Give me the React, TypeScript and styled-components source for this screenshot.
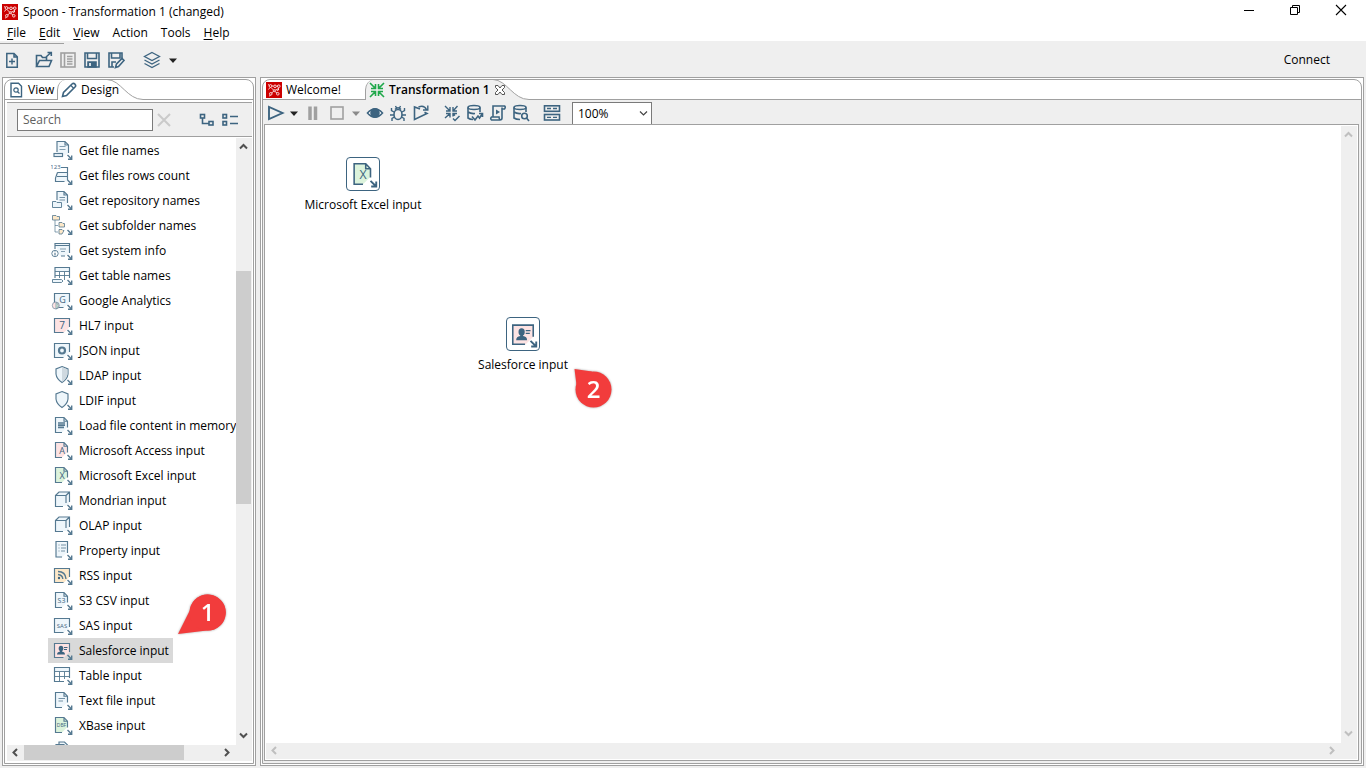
import React from "react";
import styled, { createGlobalStyle, css } from "styled-components";

const INK = "#3d6480";
const SOFT_INK = "#557991";
const LINE = "#a0a0a0";
const CHROME = "#efefef";

const GlobalStyle = createGlobalStyle`
  * { box-sizing: border-box; }
  html, body { margin: 0; padding: 0; }
  body, button, input, select {
    font-family: "Open Sans", "Noto Sans", sans-serif;
    font-size: 12px;
    line-height: 16px;
    color: #000;
  }
  button { background: none; border: 0; padding: 0; margin: 0; }
  svg { display: block; flex: none; }
`;

/* ---------- window chrome ---------- */

const Window = styled.div`
  display: flex;
  flex-direction: column;
  height: 100vh;
  min-height: 480px;
  background: ${CHROME};
  overflow: hidden;
`;

const TitleBar = styled.header`
  display: flex;
  align-items: center;
  gap: 5px;
  height: 23px;
  padding: 0 17px 0 2px;
  background: #fff;
`;

const Title = styled.h1`
  flex: 1;
  margin: 0;
  font-size: 12px;
  font-weight: 400;
  line-height: 16px;
`;

const WindowButtons = styled.div`
  display: flex;
  align-self: flex-start;
  gap: 30px;
  padding-top: 2px;
`;

const MenuBar = styled.nav`
  display: flex;
  align-items: center;
  gap: 13px;
  height: 18px;
  padding: 2px 7px 0;
  background: #fff;
`;

const Mnemonic = styled.span`
  text-decoration: underline;
  text-underline-offset: 2px;
`;

const MainToolbar = styled.div`
  display: flex;
  align-items: center;
  height: 36px;
  padding: 2px 36px 0 3px;
`;

const MenuRule = styled.hr`
  width: 64px;
  height: 1px;
  margin: 2px 0 -3px;
  border: 0;
  background: ${LINE};
`;

const ToolGroup = styled.div<{ $gap: number; $after: number }>`
  display: flex;
  align-items: center;
  gap: ${(p) => p.$gap}px;
  margin-right: ${(p) => p.$after}px;
`;

const Spacer = styled.div`
  flex: 1;
`;

const Main = styled.main`
  display: flex;
  flex: 1;
  gap: 4px;
  min-height: 0;
  padding: 0 2px 2px;
`;

/* ---------- panels ---------- */

const Panel = styled.section<{ $side?: boolean }>`
  position: relative;
  display: flex;
  min-width: 0;
  padding: 1px;
  border: 1px solid ${LINE};
  background: #fff;
  ${(p) => (p.$side ? css`flex: 0 0 254px;` : css`flex: 1;`)}
`;

const PanelInner = styled.div`
  display: flex;
  flex: 1;
  flex-direction: column;
  min-width: 0;
  border: 1px solid ${LINE};
  border-radius: 8px 8px 0 0;
  overflow: hidden;
`;

const TabStrip = styled.div`
  display: flex;
  flex: none;
  height: 20px;
`;

const Tab = styled.button<{ $width: number }>`
  display: flex;
  align-items: center;
  gap: 4px;
  width: ${(p) => p.$width}px;
  padding-left: 3px;
  border-bottom: 1px solid ${LINE};
  white-space: nowrap;
`;

const ActiveTab = styled.button<{ $width: number; $fill: string; $bold?: boolean }>`
  position: relative;
  z-index: 1;
  display: flex;
  align-items: center;
  gap: 4px;
  width: ${(p) => p.$width}px;
  padding-left: 3px;
  border-left: 1px solid ${LINE};
  border-top-left-radius: 8px 10px;
  background: ${(p) => p.$fill};
  font-weight: ${(p) => (p.$bold ? 600 : 400)};
  white-space: nowrap;
`;

const StripRest = styled.div`
  flex: 1;
  border-bottom: 1px solid ${LINE};
`;

const SideBody = styled.div`
  display: flex;
  flex: 1;
  flex-direction: column;
  min-height: 0;
  padding: 2px 1px 2px 2px;
`;

const SearchRow = styled.div`
  display: flex;
  flex: none;
  align-items: center;
  height: 35px;
  margin-bottom: 1px;
  padding: 0 13px 0 10px;
  border-top: 1px solid ${LINE};
  border-bottom: 1px solid ${LINE};
  background: ${CHROME};
`;

const SearchInput = styled.input`
  width: 136px;
  height: 22px;
  margin-right: 4px;
  padding: 0 5px;
  border: 1px solid #7a7a7a;
  border-radius: 0;
  background: #fff;
  outline: 0;
  &::placeholder { color: #606060; opacity: 1; }
`;

const ScrollArea = styled.div`
  display: grid;
  flex: 1;
  grid-template-columns: minmax(0, 1fr) 16px;
  grid-template-rows: minmax(0, 1fr) 16px;
  min-height: 0;
`;

const Corner = styled.div`
  background: ${CHROME};
`;

const Tree = styled.ul`
  margin: 0;
  padding: 0 0 0 41px;
  list-style: none;
  overflow: hidden;
`;

const TreeRow = styled.button<{ $selected?: boolean }>`
  display: flex;
  align-items: center;
  gap: 6px;
  height: 25px;
  padding: 0 4px 0 3px;
  background: ${(p) => (p.$selected ? "#d9d9d9" : "transparent")};
  white-space: nowrap;
  svg { margin-bottom: 1px; }
`;

const Bar = styled.div<{ $vertical?: boolean }>`
  display: flex;
  flex-direction: ${(p) => (p.$vertical ? "column" : "row")};
  padding: 0 1px 1px 0;
  background: ${CHROME};
`;

const BarButton = styled.button`
  display: flex;
  flex: 0 0 17px;
  align-items: center;
  justify-content: center;
`;

const Portion = styled.div<{ $grow: number; $thumb?: boolean }>`
  flex: ${(p) => p.$grow} 1 0;
  background: ${(p) => (p.$thumb ? "#cdcdcd" : "transparent")};
`;

/* ---------- editor ---------- */

const EditorBody = styled.div`
  display: flex;
  flex: 1;
  flex-direction: column;
  min-height: 0;
  padding: 0 2px 2px 1px;
  background: ${CHROME};
`;

const EditorToolbar = styled.div`
  display: flex;
  flex: none;
  align-items: center;
  height: 24px;
  padding: 2px 0 0 3px;
`;

const ZoomBox = styled.div`
  position: relative;
  width: 80px;
  height: 22px;
  svg {
    position: absolute;
    top: 7px;
    right: 4px;
    pointer-events: none;
  }
`;

const ZoomSelect = styled.select`
  width: 100%;
  height: 100%;
  padding: 0 5px;
  appearance: none;
  border: 1px solid #7a7a7a;
  border-bottom: 0;
  border-radius: 0;
  background: #fff;
`;

const CanvasFrame = styled.div`
  display: flex;
  flex: 1;
  min-height: 0;
  padding: 1px;
  border: 1px solid ${LINE};
  background: #fff;
`;

const Canvas = styled.div`
  position: relative;
  overflow: hidden;
`;

const StepNode = styled.figure<{ $x: number; $y: number }>`
  position: absolute;
  top: ${(p) => p.$y}px;
  left: ${(p) => p.$x}px;
  display: flex;
  flex-direction: column;
  align-items: center;
  gap: 6px;
  width: 140px;
  margin: 0;
`;

const StepTile = styled.div`
  display: flex;
  align-items: center;
  justify-content: center;
  width: 34px;
  height: 34px;
  border: 1px solid ${INK};
  border-radius: 4px;
`;

const Callout = styled.svg<{ $x: number; $y: number }>`
  position: absolute;
  top: ${(p) => p.$y}px;
  left: ${(p) => p.$x}px;
  filter: drop-shadow(0 0 1px rgba(0, 0, 0, 0.35));
  font-family: "Open Sans", sans-serif;
  font-size: 24px;
  font-weight: 600;
`;

/* ---------- icons ---------- */

type DrawingProps = { children: React.ReactNode; size?: number; width?: number; stroke?: string };

const Drawing = ({ children, size = 18, width, stroke = INK }: DrawingProps) => (
  <svg
    width={width ?? size}
    height={size}
    viewBox={`0 0 ${width ?? size} ${size}`}
    fill="none"
    stroke={stroke}
    strokeWidth="1.6"
    aria-hidden="true"
  >
    {children}
  </svg>
);

const Logo = () => (
  <svg width="16" height="16" viewBox="0 0 16 16" fill="none" stroke="#fff" strokeWidth="0.8" aria-hidden="true">
    <rect width="16" height="16" fill="#cc0000" stroke="none" />
    <path d="M5 5.500L7.500 8M10.500 7L9 8.500M7.500 9.500L5.500 11M9 9.500L11 11M6 4H7.500M10.500 4.200L12 4M4.500 13.500L3 14M12.500 6V8" />
    <circle cx="4.500" cy="4" r="1.400" />
    <circle cx="9" cy="4.300" r="1.300" />
    <circle cx="12.800" cy="4.200" r="1.300" />
    <circle cx="4.800" cy="11.800" r="1.300" />
    <circle cx="11.800" cy="11.800" r="1.300" />
    <circle cx="8.300" cy="8.700" r="1" />
    <circle cx="11.500" cy="7.800" r="0.800" />
    <path d="M2 2.500L3.300 3.200M2.500 7.500L4 5.500" />
  </svg>
);

const Caret = ({ color = "#222" }: { color?: string }) => (
  <svg width="8" height="5" viewBox="0 0 8 5" aria-hidden="true">
    <path d="M0 0.500H8L4 5Z" fill={color} />
  </svg>
);

const chevrons = {
  up: "M1 6.500L4.500 3L8 6.500",
  down: "M1 2.500L4.500 6L8 2.500",
  left: "M6 1L2.500 4.500L6 8",
  right: "M3 1L6.500 4.500L3 8",
};

const Chevron = ({ dir, color, weight = 2 }: { dir: keyof typeof chevrons; color: string; weight?: number }) => (
  <svg width="9" height="9" viewBox="0 0 9 9" fill="none" stroke={color} strokeWidth={weight} aria-hidden="true">
    <path d={chevrons[dir]} />
  </svg>
);

const icons = {
  create: (
    <Drawing>
      <path d="M3.800 2.500H11L14.300 5.800V16.200H3.800ZM11 2.500V6H14.500" strokeWidth="1.500" />
      <path d="M9 7.500V13.500M6 10.500H12" strokeWidth="1.400" />
    </Drawing>
  ),
  open: (
    <Drawing>
      <path d="M1.500 15.500V4.500H6L7.500 6.500H11.500V9M1.500 15.500L4.500 9.500H16.500L14 15.500Z" />
      <path d="M11 6L16 1.500M12.500 1.500H16.300V5" />
    </Drawing>
  ),
  explore: (
    <Drawing stroke="#a0a0a0">
      <rect x="2" y="2" width="14" height="14" />
      <path d="M5.500 2V16M8 5.500H13.500M8 8H13.500M8 10.500H13.500M8 13H13.500" />
    </Drawing>
  ),
  save: (
    <Drawing>
      <path d="M2 2H16V16H2Z" />
      <path d="M4.500 2V7.500H13.500V2" />
      <path d="M5 11H13V16H5Z" fill={INK} />
      <path d="M7 12V15" stroke="#fff" />
    </Drawing>
  ),
  saveAs: (
    <Drawing>
      <path d="M7 16H2V2H15V7" />
      <path d="M4.500 2V7H13V2M5 16V11H9" />
      <path d="M8.500 16.500L9.500 13L15 7.500L17 9.500L11.500 15.500Z" fill={CHROME} />
    </Drawing>
  ),
  layers: (
    <Drawing>
      <path d="M9 1.500L16.500 5.500L9 9.500L1.500 5.500Z" strokeWidth="1.300" />
      <path d="M1.500 9L9 13L16.500 9M1.500 12.500L9 16.500L16.500 12.500" strokeWidth="1.300" />
    </Drawing>
  ),
  view: (
    <Drawing size={16}>
      <path d="M3 1.200H10.500L13.500 4.200V14.800H3Z" strokeWidth="1.400" />
      <circle cx="8" cy="8" r="2.200" strokeWidth="1.200" />
      <path d="M9.500 9.700L11.500 11.500" strokeWidth="1.200" />
    </Drawing>
  ),
  pencil: (
    <Drawing size={16}>
      <path d="M1.500 14.500L2.500 10.500L11 2Q12.500 0.800 14 2.200Q15.300 3.700 14 5L5.500 13.500Z" />
      <path d="M10 3.500L12.800 6.500" strokeWidth="1.200" />
    </Drawing>
  ),
  clear: (
    <Drawing size={14} stroke="#cacaca">
      <path d="M1 1L13 13M13 1L1 13" strokeWidth="2" />
    </Drawing>
  ),
  expand: (
    <Drawing size={14} width={16}>
      <rect x="1.500" y="1.500" width="4" height="3.500" />
      <rect x="10" y="8.500" width="4" height="3.500" />
      <path d="M3.500 5V10.500H10" />
    </Drawing>
  ),
  collapse: (
    <Drawing size={14} width={18}>
      <rect x="2" y="1.500" width="3.500" height="3.500" />
      <rect x="2" y="8.500" width="3.500" height="3.500" />
      <path d="M9 3.500H17M9 10.500H17" />
    </Drawing>
  ),
  play: (
    <Drawing>
      <path d="M2 3V15L15.500 9Z" strokeWidth="1.900" />
    </Drawing>
  ),
  pause: (
    <Drawing stroke="#a0a0a0">
      <path d="M6 2.500V16M11.500 2.500V16" strokeWidth="3.500" />
    </Drawing>
  ),
  stop: (
    <Drawing stroke="#a0a0a0">
      <rect x="3" y="3" width="12" height="12" />
    </Drawing>
  ),
  eye: (
    <Drawing>
      <path d="M1.500 9Q9 0.500 16.500 9Q9 17.500 1.500 9Z" fill="#fff" />
      <circle cx="9" cy="9" r="4" fill={INK} />
    </Drawing>
  ),
  bug: (
    <Drawing>
      <ellipse cx="9" cy="10.500" rx="4" ry="5" />
      <path d="M6 5.500Q9 2 12 5.500M6.500 2L7.500 4M11.500 2L10.500 4M5 8L2.500 6.500V4M13 8L15.500 6.500V4M5 11H1M13 11H17M5.500 13L3 14.500V17M12.500 13L15 14.500V17" strokeWidth="1.400" />
    </Drawing>
  ),
  replay: (
    <Drawing>
      <path d="M8 5L2.500 3V15.500L15 9.500L12.500 8.200" />
      <path d="M6.500 3Q12 0.500 14.500 5.500M15.800 1.500V6H11" strokeWidth="1.400" />
    </Drawing>
  ),
  verify: (
    <Drawing>
      <path d="M2 2L6.500 6.500M7 3V7H3M14.500 2L10.500 6.500M10 3V7H14M2 14L6.500 10M7 13.500V9.500H3M10 12.500V9.500H14M10 9.500L12 11.500" strokeWidth="1.400" />
      <path d="M10 14.500L12 16.500L16.500 12" strokeWidth="1.500" />
    </Drawing>
  ),
  impact: (
    <Drawing>
      <ellipse cx="8" cy="3.500" rx="6" ry="2" />
      <path d="M2 3.500V14Q4 15.500 7 15.500M14 3.500V8M2 8Q5 10 9 9.500" />
      <path d="M6 12.500L9 16L12 12L13.500 14L16.500 9.500M13 9.500H16.500V13" />
    </Drawing>
  ),
  script: (
    <Drawing>
      <path d="M4 13V2H15.500Q17 3 15.500 5H13V14Q13 16 11 16H2.500Q1 14.500 2.500 13H10Q10 15.500 11.500 16M13 5V3.500" />
      <path d="M7 5.500V10.500L11 8Z" fill={INK} stroke="none" />
    </Drawing>
  ),
  exploreDb: (
    <Drawing>
      <ellipse cx="8" cy="3.500" rx="6" ry="2" />
      <path d="M2 3.500V14Q4 15.500 8 15.500M14 3.500V8M2 8Q5 10 9 9.500" />
      <circle cx="12.500" cy="12" r="2.800" fill={CHROME} />
      <path d="M14.500 14L17 17" />
    </Drawing>
  ),
  results: (
    <Drawing>
      <rect x="1.500" y="1.800" width="15" height="5.500" />
      <rect x="1.500" y="10.500" width="15" height="5.500" />
      <path d="M4 4.500H8M10 4.500H14M4 13.300H8M10 13.300H14" strokeWidth="1.300" />
    </Drawing>
  ),
};

/* Shared pieces of the step icons, drawn on a 22 x 22 grid */

const BLUE = "#eef6fb";
const PINK = "#fde3e3";
const GREEN = "#dcf3dc";
const SAND = "#fde8c8";

const SquareFrame = ({ fill }: { fill: string }) => (
  <>
    <path d="M3.500 4.500H18.500V13L13 18.500H3.500Z" fill={fill} stroke="none" />
    <path d="M18.500 13V4.500H3.500V18.500H12.500" />
  </>
);

const FileFrame = ({ fill }: { fill: string }) => (
  <>
    <path d="M4.500 3.500H13L16.500 7V13L11 18.500H4.500Z" fill={fill} stroke="none" />
    <path d="M11 18.500H4.500V3.500H13L16.500 7.200V13.500M13 3.500V7.200H16.500" />
  </>
);

const Letter = ({ children, size = 10, x = 11, y = 15 }: { children: string; size?: number; x?: number; y?: number }) => (
  <text
    x={x}
    y={y}
    fill={INK}
    stroke="none"
    textAnchor="middle"
    fontFamily="Open Sans, sans-serif"
    fontSize={size}
  >
    {children}
  </text>
);

const Person = () => (
  <g fill={INK} stroke="none">
    <ellipse cx="10" cy="9.500" rx="2.300" ry="2.700" />
    <path d="M6 15.500Q6 13 9 12.500V11H11V12.500Q14 13 14 15.500Z" />
    <path d="M13 8H16.500V9H13ZM13 10H16V11H13Z" />
  </g>
);

const steps = {
  fileNames: (
    <>
      <path d="M6 14V2.500H14L17.500 6V14L13 17H11V14Z" fill={BLUE} stroke="none" />
      <path d="M6 13V2.500H14L17.500 6V14M14 2.500V6H17.500" />
      <path d="M8.500 7.500H14.500M8.500 10.500H14.500" strokeWidth="0.700" />
      <rect x="3" y="14.500" width="8.500" height="3" fill={BLUE} />
    </>
  ),
  rowsCount: (
    <>
      <Letter size={6} x={4.500} y={5}>123</Letter>
      <path d="M6 9H16.500V17.500H5V13.500L6 9Z" fill={BLUE} stroke="none" />
      <path d="M10 3.500H16.500V16M6.500 8.500H16.500M6 12.500H16.500M13.500 17.500H4.500V14L6.500 8.500" />
    </>
  ),
  repository: (
    <>
      <path d="M6 2.500H13L16.500 6V14L12 18H6Z" fill={BLUE} stroke="none" />
      <path d="M6 11V2.500H13L16.500 6V14M13 2.500V6H16.500" />
      <path d="M8.500 8.500H14M8.500 11H14" strokeWidth="0.800" />
      <path d="M1.500 12.500H5L6 13.500H10.500V18.500H1.500Z" fill={BLUE} strokeWidth="0.900" />
    </>
  ),
  subfolder: (
    <>
      <path d="M1.500 1.500H5L6 2.500H8.500V6H1.500ZM8 8.500H11L12 9.500H13.500V13H8ZM8 15.500H11L12 16.500H13L11 20H8Z" fill={SAND} strokeWidth="0.800" />
      <path d="M4 6V18H7M4 11.500H7" strokeWidth="0.700" />
    </>
  ),
  system: (
    <>
      <path d="M4 4H18.500V13L14 17H9Z" fill={BLUE} stroke="none" />
      <path d="M4 10V4.500H18.500V14M4 6.500H18.500M10 17H14" />
      <path d="M9 10H15M10 12.500H14" strokeWidth="0.700" />
      <circle cx="4" cy="14.500" r="3.200" fill="#fff" strokeWidth="0.900" />
      <path d="M4 14V16.500M4 12.500V13.300" />
    </>
  ),
  tableNames: (
    <>
      <path d="M4 4H18.500V8H4Z" fill={BLUE} stroke="none" />
      <path d="M4 14V3.500H18.500V14" />
      <path d="M4 7.500H18.500M4 11.500H18.500M8.500 8V14M13.500 8V16" strokeWidth="0.900" />
      <path d="M1.500 15.500H10.500L12 17L10.500 18.500H1.500Z" fill={BLUE} strokeWidth="0.900" />
    </>
  ),
  google: (
    <>
      <SquareFrame fill={BLUE} />
      <Letter x={11.500} y={14} size={9}>G</Letter>
      <circle cx="4.800" cy="16.500" r="3.500" fill={PINK} strokeWidth="0.600" />
      <path d="M5 13.500V20A3.500 3.500 0 0 0 5 13.500Z" fill={GREEN} strokeWidth="0.600" />
    </>
  ),
  hl7: (
    <>
      <SquareFrame fill={PINK} />
      <Letter>7</Letter>
    </>
  ),
  json: (
    <>
      <SquareFrame fill={BLUE} />
      <circle cx="11" cy="11.500" r="3" strokeWidth="2.200" />
    </>
  ),
  ldap: (
    <>
      <path d="M11 2.500L17 5V10Q16.500 15 11 18.500Q5.500 15 5 10V5Z" fill={BLUE} />
      <path d="M11 3L16.500 5.500V10Q16 14.500 11 18Z" fill="#cfd9e0" stroke="none" />
    </>
  ),
  ldif: <path d="M11 2.500L17 5V10Q16.500 15 11 18.500Q5.500 15 5 10V5Z" fill={BLUE} />,
  loadFile: (
    <>
      <FileFrame fill={BLUE} />
      <path d="M7 9H14M7 11.200H14M7 13.400H13" strokeWidth="1.700" />
    </>
  ),
  access: (
    <>
      <FileFrame fill={PINK} />
      <Letter size={9}>A</Letter>
    </>
  ),
  excel: (
    <>
      <FileFrame fill={GREEN} />
      <Letter size={9}>X</Letter>
    </>
  ),
  cube: (
    <>
      <path d="M4.500 7L8 3.500H18.500V14L15 17H4.500Z" fill={BLUE} stroke="none" />
      <path d="M12 17.500H4.500V6.500H15V14M4.500 6.500L8 3H18.500V13M15 6.500L18.500 3" />
    </>
  ),
  property: (
    <>
      <path d="M5 3.500H16.500V13L11 18.500H5Z" fill={BLUE} stroke="none" />
      <path d="M11 18H5V2.500H16.500V14" />
      <path d="M7.500 6H8.500M10 6H15M7.500 9H8.500M10 9H15M7.500 12H8.500M10 12H14" strokeWidth="0.800" />
    </>
  ),
  rss: (
    <>
      <SquareFrame fill={SAND} />
      <path d="M7 7.500Q14.500 7.500 15 15M7 10.500Q11.500 11 11.800 15" strokeWidth="1.400" />
      <circle cx="8" cy="14" r="1.200" fill={INK} stroke="none" />
    </>
  ),
  s3: (
    <>
      <FileFrame fill={BLUE} />
      <Letter size={7} x={10.500} y={13.500}>S3</Letter>
    </>
  ),
  sas: (
    <>
      <SquareFrame fill={BLUE} />
      <Letter size={6} y={13.500}>SAS</Letter>
    </>
  ),
  salesforce: (
    <>
      <SquareFrame fill={PINK} />
      <Person />
    </>
  ),
  table: (
    <>
      <path d="M4 4H18.500V8H4Z" fill={BLUE} stroke="none" />
      <path d="M18.500 14V3.500H3.500V17.500H13" />
      <path d="M4 7.500H18.500M4 12.500H18.500M8.500 8V17M13.500 8V15" strokeWidth="0.900" />
    </>
  ),
  textFile: (
    <>
      <FileFrame fill={BLUE} />
      <path d="M7.500 9.500H14M7.500 12H12" strokeWidth="0.800" />
    </>
  ),
  xbase: (
    <>
      <FileFrame fill={GREEN} />
      <Letter size={5} x={10.500} y={13}>DBF</Letter>
    </>
  ),
  stack: <path d="M5 20V5.500H8V3H13.500L16.500 6V20M8 5.500H13V8" fill={BLUE} />,
};

type StepName = keyof typeof steps;

const StepIcon = ({ name, size = 22, ink = SOFT_INK }: { name: StepName; size?: number; ink?: string }) => (
  <svg
    width={size}
    height={size}
    viewBox="0 0 22 22"
    fill="none"
    stroke={ink}
    strokeWidth="1.150"
    aria-hidden="true"
  >
    {steps[name]}
    <path d="M16.500 16L20.500 20M20.700 16.500V20.200H17" strokeWidth="1.400" />
  </svg>
);

/* ---------- data ---------- */

const menus = [
  ["F", "ile"],
  ["E", "dit"],
  ["V", "iew"],
  ["", "Action"],
  ["", "Tools"],
  ["H", "elp"],
];

const treeItems: { icon: StepName; label: string }[] = [
  { icon: "fileNames", label: "Get file names" },
  { icon: "rowsCount", label: "Get files rows count" },
  { icon: "repository", label: "Get repository names" },
  { icon: "subfolder", label: "Get subfolder names" },
  { icon: "system", label: "Get system info" },
  { icon: "tableNames", label: "Get table names" },
  { icon: "google", label: "Google Analytics" },
  { icon: "hl7", label: "HL7 input" },
  { icon: "json", label: "JSON input" },
  { icon: "ldap", label: "LDAP input" },
  { icon: "ldif", label: "LDIF input" },
  { icon: "loadFile", label: "Load file content in memory" },
  { icon: "access", label: "Microsoft Access input" },
  { icon: "excel", label: "Microsoft Excel input" },
  { icon: "cube", label: "Mondrian input" },
  { icon: "cube", label: "OLAP input" },
  { icon: "property", label: "Property input" },
  { icon: "rss", label: "RSS input" },
  { icon: "s3", label: "S3 CSV input" },
  { icon: "sas", label: "SAS input" },
  { icon: "salesforce", label: "Salesforce input" },
  { icon: "table", label: "Table input" },
  { icon: "textFile", label: "Text file input" },
  { icon: "xbase", label: "XBase input" },
  { icon: "stack", label: "" },
];

const Tool = ({ label, children }: { label: string; children: React.ReactNode }) => (
  <button type="button" aria-label={label}>{children}</button>
);

type ScrollbarProps = { vertical?: boolean; color: string; before?: number; thumb?: number; after?: number };

const Scrollbar = ({ vertical, color, before = 1, thumb = 0, after = 0 }: ScrollbarProps) => (
  <Bar $vertical={vertical}>
    <BarButton type="button" aria-label={vertical ? "Scroll up" : "Scroll left"}>
      <Chevron dir={vertical ? "up" : "left"} color={color} />
    </BarButton>
    <Portion $grow={before} />
    <Portion $grow={thumb} $thumb />
    <Portion $grow={after} />
    <BarButton type="button" aria-label={vertical ? "Scroll down" : "Scroll right"}>
      <Chevron dir={vertical ? "down" : "right"} color={color} />
    </BarButton>
  </Bar>
);

const TabCurve = ({ fill }: { fill: string }) => (
  <svg width="36" height="20" viewBox="0 0 36 20" aria-hidden="true">
    <path d="M0 0C14 0 20 19.500 36 19.500V20H0Z" fill={fill} />
    <path d="M0 -0.500C14 0 20 19.500 36 19.500" fill="none" stroke={LINE} />
  </svg>
);

/* ---------- sections ---------- */

const DesignPanel = () => (
  <Panel $side>
    <PanelInner>
      <TabStrip role="tablist">
        <Tab type="button" role="tab" $width={52}>
          {icons.view}
          View
        </Tab>
        <ActiveTab type="button" role="tab" aria-selected $width={50} $fill="#fff">
          {icons.pencil}
          Design
        </ActiveTab>
        <TabCurve fill="#fff" />
        <StripRest />
      </TabStrip>
      <SideBody>
        <SearchRow>
          <SearchInput type="text" placeholder="Search" aria-label="Search" />
          <Tool label="Clear search">{icons.clear}</Tool>
          <Spacer />
          <ToolGroup $gap={6} $after={0}>
            <Tool label="Expand all">{icons.expand}</Tool>
            <Tool label="Collapse all">{icons.collapse}</Tool>
          </ToolGroup>
        </SearchRow>
        <ScrollArea>
          <Tree>
            {treeItems.map((item) => (
              <li key={item.icon + item.label}>
                <TreeRow type="button" $selected={item.label === "Salesforce input"}>
                  <StepIcon name={item.icon} />
                  {item.label}
                </TreeRow>
              </li>
            ))}
          </Tree>
          <Scrollbar vertical color="#505050" before={116} thumb={233} after={223} />
          <Scrollbar color="#505050" before={0} thumb={161} after={34} />
          <Corner />
        </ScrollArea>
      </SideBody>
    </PanelInner>
    <Callout $x={173} $y={514} width="54" height="44" viewBox="0 0 54 44">
      <path d="M2 42L14 18A18 18 0 1 1 31 38.500Z" fill="#f23c3c" />
      <circle cx="31.500" cy="20.500" r="18" fill="#f23c3c" />
      <text x="31.500" y="29" fill="#fff" textAnchor="middle">1</text>
    </Callout>
  </Panel>
);

const Editor = () => (
  <Panel>
    <PanelInner>
      <TabStrip role="tablist">
        <Tab type="button" role="tab" $width={102}>
          <Logo />
          Welcome!
        </Tab>
        <ActiveTab type="button" role="tab" aria-selected $width={128} $fill={CHROME} $bold>
          <Drawing size={16} stroke="#1fa84a">
            <path d="M1 1L6 6M6.500 2V6.500H2M15 1L10 6M9.500 2V6.500H14M1 15L6 10M6.500 14V9.500H2M15 15L10 10M9.500 14V9.500H14" />
          </Drawing>
          Transformation 1
          <svg width="12" height="12" viewBox="0 0 12 12" fill="#fff" stroke="#555" aria-hidden="true">
            <path d="M1.500 1.500H4L6 4L8 1.500H10.500V3.500L8 6L10.500 8.500V10.500H8L6 8L4 10.500H1.500V8.500L4 6L1.500 3.500Z" />
          </svg>
        </ActiveTab>
        <TabCurve fill={CHROME} />
        <StripRest />
      </TabStrip>
      <EditorBody>
        <EditorToolbar>
          <ToolGroup $gap={5} $after={6}>
            <Tool label="Run">{icons.play}</Tool>
            <Tool label="Run options"><Caret /></Tool>
          </ToolGroup>
          <ToolGroup $gap={6} $after={6}>
            <Tool label="Pause">{icons.pause}</Tool>
            <Tool label="Stop">{icons.stop}</Tool>
            <Tool label="Stop options"><Caret color="#8a8a8a" /></Tool>
          </ToolGroup>
          <ToolGroup $gap={5} $after={13}>
            <Tool label="Preview">{icons.eye}</Tool>
            <Tool label="Debug">{icons.bug}</Tool>
            <Tool label="Replay">{icons.replay}</Tool>
          </ToolGroup>
          <ToolGroup $gap={5} $after={13}>
            <Tool label="Verify">{icons.verify}</Tool>
            <Tool label="Impact">{icons.impact}</Tool>
            <Tool label="SQL">{icons.script}</Tool>
            <Tool label="Explore database">{icons.exploreDb}</Tool>
          </ToolGroup>
          <ToolGroup $gap={5} $after={11}>
            <Tool label="Show results">{icons.results}</Tool>
          </ToolGroup>
          <ZoomBox>
            <ZoomSelect aria-label="Zoom" defaultValue="100%">
              <option>100%</option>
            </ZoomSelect>
            <Chevron dir="down" color="#444" weight={1.2} />
          </ZoomBox>
        </EditorToolbar>
        <CanvasFrame>
          <ScrollArea>
            <Canvas>
              <StepNode $x={27} $y={31}>
                <StepTile><StepIcon name="excel" size={30} ink={INK} /></StepTile>
                <figcaption>Microsoft Excel input</figcaption>
              </StepNode>
              <StepNode $x={187} $y={191}>
                <StepTile><StepIcon name="salesforce" size={30} ink={INK} /></StepTile>
                <figcaption>Salesforce input</figcaption>
              </StepNode>
              <Callout $x={306} $y={241} width="42" height="44" viewBox="0 0 42 44">
                <path d="M2.500 2L20 4.500L4.500 18Z" fill="#f23c3c" />
                <circle cx="21.500" cy="22.500" r="18" fill="#f23c3c" />
                <text x="21.500" y="31" fill="#fff" textAnchor="middle">2</text>
              </Callout>
            </Canvas>
            <Scrollbar vertical color="#bfbfbf" />
            <Scrollbar color="#bfbfbf" />
            <Corner />
          </ScrollArea>
        </CanvasFrame>
      </EditorBody>
    </PanelInner>
  </Panel>
);

export default function App() {
  return (
    <Window>
      <GlobalStyle />
      <TitleBar>
        <Logo />
        <Title>Spoon - Transformation 1 (changed)</Title>
        <WindowButtons>
          <Tool label="Minimize">
            <Drawing size={16} stroke="#000"><path d="M3 8.500H13" strokeWidth="1" /></Drawing>
          </Tool>
          <Tool label="Restore">
            <Drawing size={16} stroke="#000">
              <path d="M3.500 5.500H10.500V12.500H3.500ZM5.500 5.500V3.500H12.500V10.500H10.500" strokeWidth="1" />
            </Drawing>
          </Tool>
          <Tool label="Close">
            <Drawing size={16} stroke="#000"><path d="M3 3L13 13M13 3L3 13" strokeWidth="1.100" /></Drawing>
          </Tool>
        </WindowButtons>
      </TitleBar>
      <MenuBar>
        {menus.map(([key, rest]) => (
          <button type="button" key={rest}>
            {key && <Mnemonic>{key}</Mnemonic>}
            {rest}
          </button>
        ))}
      </MenuBar>
      <MenuRule />
      <MainToolbar>
        <ToolGroup $gap={6} $after={14}>
          <Tool label="New">{icons.create}</Tool>
        </ToolGroup>
        <ToolGroup $gap={6} $after={18}>
          <Tool label="Open">{icons.open}</Tool>
          <Tool label="Explore repository">{icons.explore}</Tool>
          <Tool label="Save">{icons.save}</Tool>
          <Tool label="Save as">{icons.saveAs}</Tool>
        </ToolGroup>
        <ToolGroup $gap={8} $after={0}>
          <Tool label="Perspective">{icons.layers}</Tool>
          <Tool label="Perspective options"><Caret /></Tool>
        </ToolGroup>
        <Spacer />
        <button type="button">Connect</button>
      </MainToolbar>
      <Main>
        <DesignPanel />
        <Editor />
      </Main>
    </Window>
  );
}
